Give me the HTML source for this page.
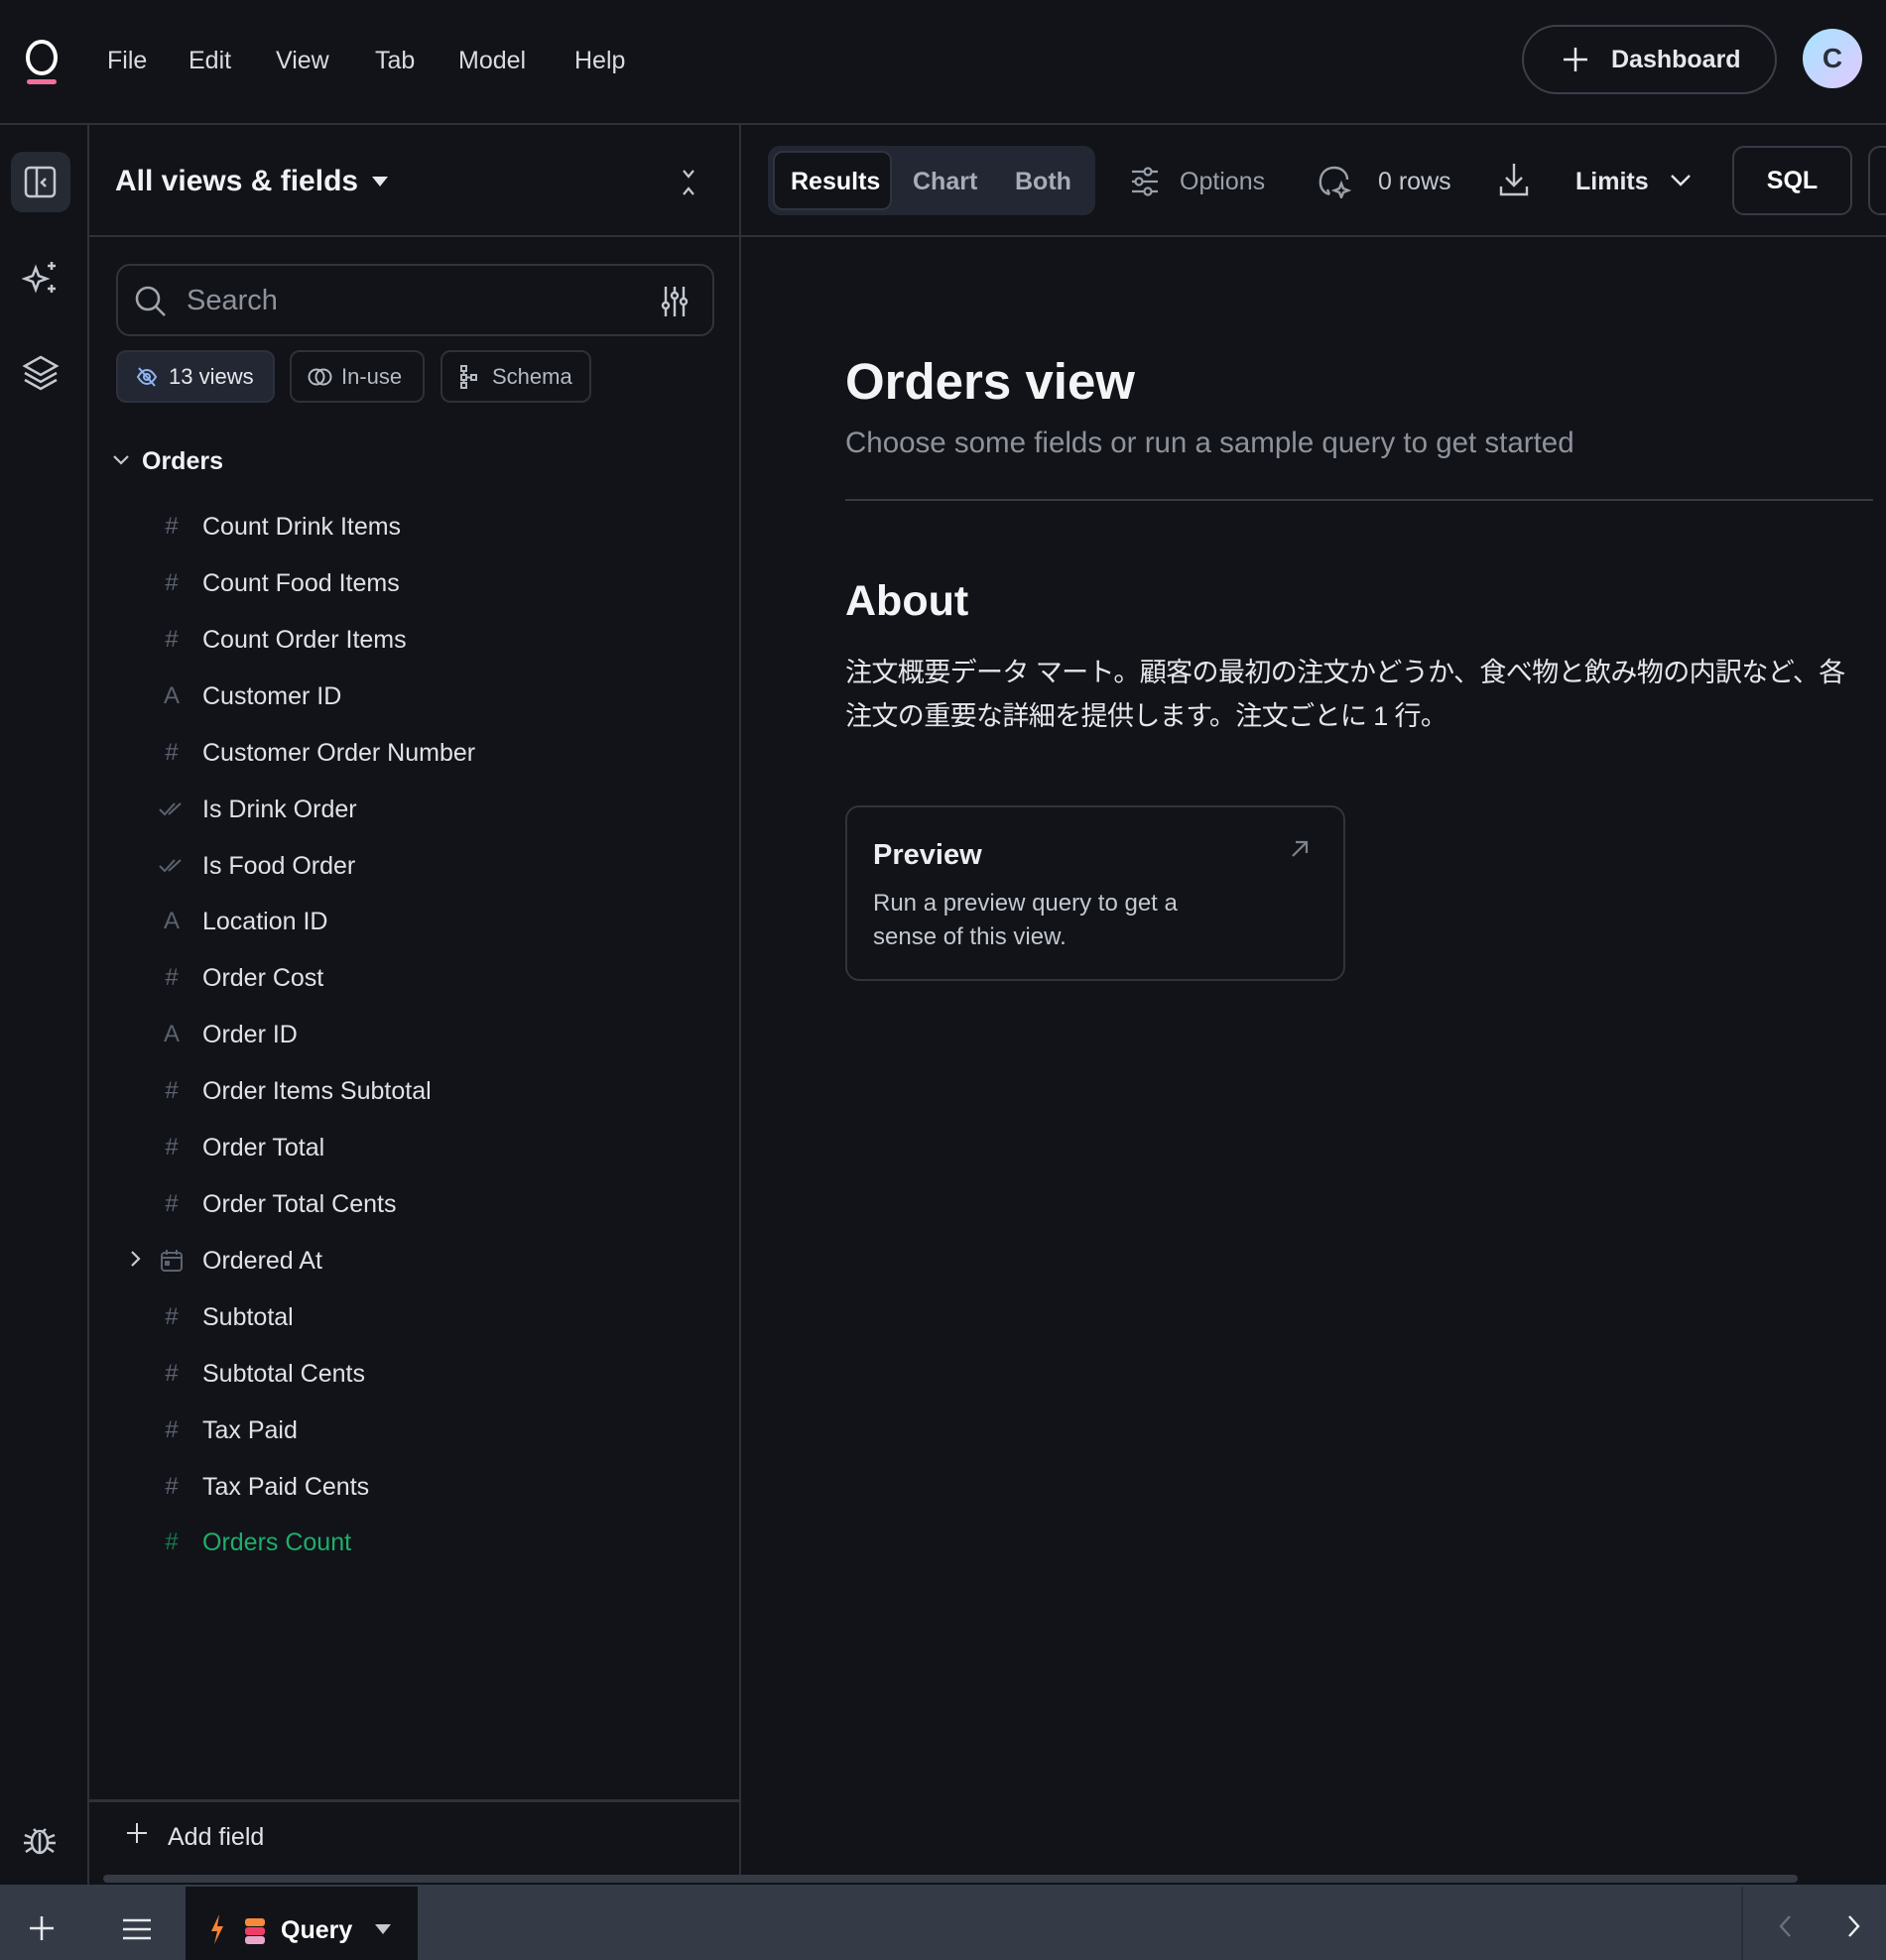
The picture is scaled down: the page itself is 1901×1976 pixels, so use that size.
<!DOCTYPE html>
<html><head><meta charset="utf-8">
<style>
*{box-sizing:border-box;margin:0;padding:0}
body{width:1901px;height:1976px;background:#111318;color:#e4e6ea;font-family:"Liberation Sans","Noto Sans CJK JP",sans-serif;position:relative;overflow:hidden}
.a{position:absolute;white-space:nowrap}
.line{position:absolute;background:#2c313a}
.menu{font-size:25px;color:#d8dbe0;top:47px}
.fld{position:absolute;left:160px;width:500px;white-space:nowrap;font-size:25px;color:#dfe2e6;height:40px;line-height:40px}
.fld .ic{position:absolute;left:0;width:26px;text-align:center;color:#5c6270;font-size:24px}
.fld .t{position:absolute;left:44px}
.chip{position:absolute;top:353px;height:53px;border:2px solid #2c313a;border-radius:10px;font-size:22px;color:#b4b9c2;line-height:49px;white-space:nowrap}
svg{position:absolute}
</style></head><body>
<svg style="left:24px;top:38px" width="36" height="48" viewBox="0 0 36 48"><ellipse cx="18" cy="20" rx="14" ry="16" fill="none" stroke="#fff" stroke-width="4"/><rect x="3" y="42" width="30" height="5" rx="2.5" fill="#f0709a"/></svg>
<div class="a menu" style="left:108px">File</div>
<div class="a menu" style="left:190px">Edit</div>
<div class="a menu" style="left:278px">View</div>
<div class="a menu" style="left:378px">Tab</div>
<div class="a menu" style="left:462px">Model</div>
<div class="a menu" style="left:579px">Help</div>
<div class="a" style="left:1534px;top:25px;width:257px;height:70px;border:2px solid #3a3f4a;border-radius:35px"></div>
<svg style="left:1575px;top:47px" width="26" height="26"><path d="M13 1v24M1 13h24" stroke="#e6e8ec" stroke-width="2.5"/></svg>
<div class="a" style="left:1624px;top:46px;font-size:25px;font-weight:bold;color:#e6e8ec">Dashboard</div>
<div class="a" style="left:1817px;top:29px;width:60px;height:60px;border-radius:50%;background:linear-gradient(135deg,#a4e4ff,#e2c9ff);color:#2a2f3a;font-size:28px;font-weight:bold;text-align:center;line-height:60px">C</div>
<div class="line" style="left:0;top:124px;width:1901px;height:2px"></div>
<div class="line" style="left:88px;top:125px;width:2px;height:1775px"></div>
<div class="a" style="left:11px;top:153px;width:60px;height:61px;border-radius:12px;background:#262a33"></div>
<svg style="left:24px;top:167px" width="34" height="34" viewBox="0 0 34 34" fill="none" stroke="#c4c8d0" stroke-width="2.5"><rect x="2" y="2" width="29" height="29" rx="4"/><path d="M13 2v29M22 13l-4 4 4 4"/></svg>
<svg style="left:22px;top:262px" width="38" height="38" viewBox="0 0 38 38" fill="none" stroke="#c4c8d0" stroke-width="2.5"><path d="M14 8l3 8 8 3-8 3-3 8-3-8-8-3 8-3z"/><path d="M30 2v8M26 6h8M30 25v8M26 29h8"/></svg>
<svg style="left:22px;top:358px" width="38" height="36" viewBox="0 0 38 36" fill="none" stroke="#c4c8d0" stroke-width="2.5"><path d="M19 2l16 9-16 9-16-9z"/><path d="M3 18l16 9 16-9M3 25l16 9 16-9"/></svg>
<svg style="left:22px;top:1836px" width="36" height="36" viewBox="0 0 36 36" fill="none" stroke="#c4c8d0" stroke-width="2.5"><ellipse cx="18" cy="21" rx="8" ry="11"/><path d="M12 8l3 3M24 8l-3 3M18 12v20M3 14l7 3M33 14l-7 3M2 22h8M34 22h-8M4 31l6-4M32 31l-6-4"/></svg>
<div class="line" style="left:745px;top:125px;width:2px;height:1765px"></div>
<div class="line" style="left:90px;top:237px;width:1811px;height:2px"></div>
<div class="a" style="left:116px;top:166px;font-size:30px;font-weight:bold;color:#f0f2f5">All views &amp; fields</div>
<svg style="left:375px;top:178px" width="16" height="12"><path d="M0 0h16L8 10z" fill="#e6e8ec"/></svg>
<svg style="left:684px;top:171px" width="20" height="26" viewBox="0 0 20 26" fill="none" stroke="#c4c8d0" stroke-width="2.2"><path d="M5 1l5 6 5-6M5 25l5-6 5 6"/></svg>
<div class="a" style="left:117px;top:266px;width:603px;height:73px;border:2px solid #2f343e;border-radius:14px"></div>
<svg style="left:135px;top:287px" width="34" height="34" viewBox="0 0 34 34" fill="none" stroke="#a0a5ae" stroke-width="2.6"><circle cx="14" cy="14" r="11"/><path d="M22 22l9 9"/></svg>
<div class="a" style="left:188px;top:287px;font-size:29px;color:#8d929c">Search</div>
<svg style="left:666px;top:288px" width="28" height="32" viewBox="0 0 28 32" fill="none" stroke="#c4c8d0" stroke-width="2.4"><path d="M5 1v30M14 1v30M23 1v30"/><circle cx="5" cy="20" r="3" fill="#111318"/><circle cx="14" cy="10" r="3" fill="#111318"/><circle cx="23" cy="16" r="3" fill="#111318"/></svg>
<div class="chip" style="left:117px;width:160px;background:#232733;color:#e6e8ec"><svg style="left:18px;top:14px" width="22" height="22" viewBox="0 0 22 22" fill="none" stroke="#8db4f2" stroke-width="2"><path d="M2 11c3-5 6-7 9-7s6 2 9 7c-3 5-6 7-9 7s-6-2-9-7z"/><circle cx="11" cy="11" r="3"/><path d="M3 2l16 18"/></svg><span style="position:absolute;left:51px">13 views</span></div>
<div class="chip" style="left:292px;width:136px"><svg style="left:16px;top:15px" width="26" height="20" viewBox="0 0 26 20" fill="none" stroke="#b4b9c2" stroke-width="2"><circle cx="9" cy="10" r="7.5"/><circle cx="16" cy="10" r="7.5"/></svg><span style="position:absolute;left:50px">In-use</span></div>
<div class="chip" style="left:444px;width:152px"><svg style="left:18px;top:13px" width="18" height="24" viewBox="0 0 18 24" fill="none" stroke="#b4b9c2" stroke-width="2"><rect x="1" y="1" width="5" height="5"/><rect x="1" y="10" width="5" height="5"/><rect x="1" y="18" width="5" height="5"/><rect x="11" y="10" width="5" height="5"/><path d="M3.5 6v4M3.5 15v3M6 12.5h5"/></svg><span style="position:absolute;left:50px">Schema</span></div>
<svg style="left:113px;top:458px" width="18" height="12"><path d="M2 2l7 7 7-7" fill="none" stroke="#c4c8d0" stroke-width="2.2"/></svg>
<div class="a" style="left:143px;top:451px;font-size:25px;font-weight:bold;color:#f0f2f5">Orders</div>

<div class="fld" style="top:511px"><span class="ic">#</span><span class="t">Count Drink Items</span></div>
<div class="fld" style="top:568px"><span class="ic">#</span><span class="t">Count Food Items</span></div>
<div class="fld" style="top:625px"><span class="ic">#</span><span class="t">Count Order Items</span></div>
<div class="fld" style="top:682px"><span class="ic">A</span><span class="t">Customer ID</span></div>
<div class="fld" style="top:739px"><span class="ic">#</span><span class="t">Customer Order Number</span></div>
<div class="fld" style="top:796px"><span class="ic"><svg style="left:0;top:12px" width="26" height="16" viewBox="0 0 26 16" fill="none" stroke="#5c6270" stroke-width="2"><path d="M1 8l5 5 10-11M10 13l12-11"/></svg></span><span class="t">Is Drink Order</span></div>
<div class="fld" style="top:853px"><span class="ic"><svg style="left:0;top:12px" width="26" height="16" viewBox="0 0 26 16" fill="none" stroke="#5c6270" stroke-width="2"><path d="M1 8l5 5 10-11M10 13l12-11"/></svg></span><span class="t">Is Food Order</span></div>
<div class="fld" style="top:909px"><span class="ic">A</span><span class="t">Location ID</span></div>
<div class="fld" style="top:966px"><span class="ic">#</span><span class="t">Order Cost</span></div>
<div class="fld" style="top:1023px"><span class="ic">A</span><span class="t">Order ID</span></div>
<div class="fld" style="top:1080px"><span class="ic">#</span><span class="t">Order Items Subtotal</span></div>
<div class="fld" style="top:1137px"><span class="ic">#</span><span class="t">Order Total</span></div>
<div class="fld" style="top:1194px"><span class="ic">#</span><span class="t">Order Total Cents</span></div>
<svg style="left:131px;top:1260px" width="12" height="18"><path d="M2 2l7 7-7 7" fill="none" stroke="#c4c8d0" stroke-width="2.2"/></svg>
<div class="fld" style="top:1251px"><span class="ic"><svg style="left:2px;top:9px" width="22" height="22" viewBox="0 0 22 22" fill="none" stroke="#5c6270" stroke-width="2"><rect x="1" y="3" width="20" height="18" rx="3"/><path d="M1 8h20M6 0v5M16 0v5"/><rect x="5" y="12" width="3" height="3" fill="#5c6270"/></svg></span><span class="t">Ordered At</span></div>
<div class="fld" style="top:1308px"><span class="ic">#</span><span class="t">Subtotal</span></div>
<div class="fld" style="top:1365px"><span class="ic">#</span><span class="t">Subtotal Cents</span></div>
<div class="fld" style="top:1422px"><span class="ic">#</span><span class="t">Tax Paid</span></div>
<div class="fld" style="top:1479px"><span class="ic">#</span><span class="t">Tax Paid Cents</span></div>
<div class="fld" style="top:1535px;color:#1fae6a"><span class="ic" style="color:#177a4c">#</span><span class="t">Orders Count</span></div>

<div class="line" style="left:90px;top:1814px;width:655px;height:3px"></div>
<svg style="left:128px;top:1838px" width="20" height="20"><path d="M10 0v20M0 10h20" stroke="#d8dbe0" stroke-width="2"/></svg>
<div class="a" style="left:169px;top:1838px;font-size:25px;color:#dfe2e6">Add field</div>
<div class="a" style="left:104px;top:1890px;width:1708px;height:8px;border-radius:4px;background:#353a45"></div>

<div class="a" style="left:774px;top:147px;width:330px;height:70px;border-radius:12px;background:#232733"></div>
<div class="a" style="left:779px;top:152px;width:120px;height:60px;border-radius:10px;background:#111318;border:2px solid #2f343e"></div>
<div class="a" style="left:797px;top:169px;font-size:25px;font-weight:bold;color:#fff">Results</div>
<div class="a" style="left:920px;top:169px;font-size:25px;font-weight:bold;color:#a7acb6">Chart</div>
<div class="a" style="left:1023px;top:169px;font-size:25px;font-weight:bold;color:#a7acb6">Both</div>
<svg style="left:1139px;top:168px" width="30" height="30" viewBox="0 0 30 30" fill="none" stroke="#9aa0aa" stroke-width="2.2"><path d="M2 5h26M2 15h26M2 25h26"/><circle cx="18" cy="5" r="3.5" fill="#111318"/><circle cx="9" cy="15" r="3.5" fill="#111318"/><circle cx="18" cy="25" r="3.5" fill="#111318"/></svg>
<div class="a" style="left:1189px;top:169px;font-size:25px;color:#9aa0aa">Options</div>
<svg style="left:1328px;top:166px" width="34" height="34" viewBox="0 0 34 34" fill="none" stroke="#9aa0aa" stroke-width="2.4"><path d="M12 30C5 28 2 22 3 15 4 7 10 3 17 3s13 5 13 12"/><path d="M12 30l-2-5"/><path d="M24 19l2 5 5 2-5 2-2 5-2-5-5-2 5-2z"/></svg>
<div class="a" style="left:1389px;top:169px;font-size:25px;color:#c4c8d0">0 rows</div>
<svg style="left:1511px;top:164px" width="30" height="34" viewBox="0 0 30 34" fill="none" stroke="#c4c8d0" stroke-width="2.4"><path d="M15 1v22M7 15l8 8 8-8M2 24v8h26v-8"/></svg>
<div class="a" style="left:1588px;top:169px;font-size:25px;font-weight:bold;color:#e6e8ec">Limits</div>
<svg style="left:1683px;top:175px" width="22" height="14"><path d="M2 2l9 9 9-9" fill="none" stroke="#e6e8ec" stroke-width="2.4"/></svg>
<div class="a" style="left:1746px;top:147px;width:121px;height:70px;border:2px solid #353a45;border-radius:12px;text-align:center;line-height:66px;font-size:25px;font-weight:bold;color:#fff">SQL</div>
<div class="a" style="left:1883px;top:147px;width:40px;height:70px;border:2px solid #353a45;border-radius:12px"></div>

<div class="a" style="left:852px;top:355px;font-size:51px;font-weight:bold;color:#f2f4f6">Orders view</div>
<div class="a" style="left:852px;top:430px;font-size:29.5px;color:#8d929c">Choose some fields or run a sample query to get started</div>
<div class="line" style="left:852px;top:503px;width:1036px;height:2px;background:#353a45"></div>
<div class="a" style="left:852px;top:582px;font-size:43px;font-weight:bold;color:#f2f4f6">About</div>
<div class="a" style="left:852px;top:656px;font-size:27px;line-height:44px;color:#e4e6ea;letter-spacing:-0.6px">注文概要データ マート。顧客の最初の注文かどうか、食べ物と飲み物の内訳など、各<br>注文の重要な詳細を提供します。注文ごとに 1 行。</div>
<div class="a" style="left:852px;top:812px;width:504px;height:177px;border:2px solid #2f343e;border-radius:14px"></div>
<div class="a" style="left:880px;top:846px;font-size:29px;font-weight:bold;color:#eceef1">Preview</div>
<svg style="left:1300px;top:846px" width="20" height="20" viewBox="0 0 20 20" fill="none" stroke="#7d838d" stroke-width="2.2"><path d="M3 17L17 3M6 3h11v11"/></svg>
<div class="a" style="left:880px;top:894px;font-size:24px;line-height:34px;color:#c4c8d0">Run a preview query to get a<br>sense of this view.</div>

<div class="a" style="left:0;top:1900px;width:1901px;height:76px;background:#343a46"></div>
<svg style="left:30px;top:1932px" width="24" height="24"><path d="M12 0v24M0 12h24" stroke="#e6e8ec" stroke-width="2.5"/></svg>
<svg style="left:124px;top:1934px" width="28" height="22"><path d="M0 2h28M0 11h28M0 20h28" stroke="#e6e8ec" stroke-width="2.5"/></svg>
<div class="a" style="left:187px;top:1902px;width:234px;height:74px;background:#111318"></div>
<svg style="left:212px;top:1930px" width="14" height="30" viewBox="0 0 14 30"><path d="M9 0L1 17h6l-3 13 9-18H7z" fill="#f7833a"/></svg>
<svg style="left:246px;top:1934px" width="22" height="26" viewBox="0 0 22 26"><rect x="1" y="0" width="20" height="8" rx="3" fill="#f58a3a"/><rect x="1" y="9" width="20" height="8" rx="3" fill="#ef3d6a"/><rect x="1" y="18" width="20" height="8" rx="3" fill="#e8a6c8"/></svg>
<div class="a" style="left:283px;top:1932px;font-size:25px;font-weight:bold;color:#fff">Query</div>
<svg style="left:378px;top:1940px" width="16" height="11"><path d="M0 0h16L8 10z" fill="#c4c8d0"/></svg>
<div class="a" style="left:1755px;top:1902px;width:2px;height:74px;background:#2a2f38"></div>
<svg style="left:1792px;top:1930px" width="14" height="24"><path d="M12 2L3 12l9 10" fill="none" stroke="#6b717c" stroke-width="2.4"/></svg>
<svg style="left:1862px;top:1930px" width="14" height="24"><path d="M2 2l9 10-9 10" fill="none" stroke="#f0f2f5" stroke-width="2.4"/></svg>
</body></html>
